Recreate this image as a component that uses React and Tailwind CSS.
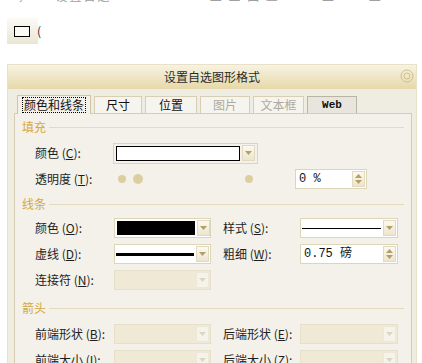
import React from 'react';

const Arrow = ({ disabled }) => (
  <svg width="7" height="4" viewBox="0 0 7 4">
    <path d="M0 0 H7 L3.5 4 Z" fill={disabled ? '#ddd6c2' : '#b3a063'} />
  </svg>
);

const DropBtn = ({ disabled }) => (
  <div className={`w-[13px] h-[16px] shrink-0 flex items-center justify-center border ${disabled ? 'border-[#ece7d8] bg-[#f6f3eb]' : 'border-[#e2dac0] bg-gradient-to-b from-[#fbf9f1] to-[#ece5cf]'}`}>
    <Arrow disabled={disabled} />
  </div>
);

const SpinBtn = () => (
  <div className="w-[13px] h-[16px] shrink-0 flex flex-col items-center justify-center gap-[2px] border border-[#e2dac0] bg-gradient-to-b from-[#fbf9f1] to-[#ece5cf]">
    <svg width="7" height="4" viewBox="0 0 7 4"><path d="M0 4 H7 L3.5 0 Z" fill="#b3a063" /></svg>
    <svg width="7" height="4" viewBox="0 0 7 4"><path d="M0 0 H7 L3.5 4 Z" fill="#b3a063" /></svg>
  </div>
);

const Label = ({ text, k, w }) => (
  <span className={`${w} shrink-0 whitespace-nowrap text-[#1e1e1e]`}>
    {text} (<u>{k}</u>):
  </span>
);

const Combo = ({ w, disabled, children }) => (
  <div className={`${w} h-[20px] flex items-center gap-[2px] pl-[1px] pr-[1px] border ${disabled ? 'border-[#e6dfca] bg-[#efe9d6]' : 'border-[#ddd5b8] bg-white'}`}>
    <div className="flex-1 h-[16px] flex items-center">{children}</div>
    <DropBtn disabled={disabled} />
  </div>
);

const Spin = ({ w, value }) => (
  <div className={`${w} h-[20px] flex items-center pl-[3px] pr-[1px] border border-[#ddd5b8] bg-white`}>
    <span className="flex-1 font-['Liberation_Mono','Noto_Sans_CJK_SC',monospace] text-[12px] text-[#111]">{value}</span>
    <SpinBtn />
  </div>
);

const Section = ({ title, h, pt }) => (
  <div className={`${h} ${pt} flex items-start pl-[7px]`}>
    <div className="h-[26px] flex items-center w-full">
      <span className="text-[#d4a843] pr-[3px]">{title}</span>
      <div className="flex-1 h-px bg-[#e4dbbd] mt-[1px]" />
    </div>
  </div>
);

const Row = ({ children }) => (
  <div className="h-[26px] flex items-center pl-[20px]">{children}</div>
);

const tabs = [
  { t: '尺寸', w: 'w-[48px]' },
  { t: '位置', w: 'w-[52px]' },
  { t: '图片', w: 'w-[50px]', off: true },
  { t: '文本框', w: 'w-[51px]', off: true },
];

export default function App() {
  return (
    <div className="w-[422px] h-[363px] overflow-hidden bg-white relative font-['Noto_Sans_CJK_SC',sans-serif] text-[12px] leading-none">
      {/* clipped line above */}
      <div className="h-[6px] overflow-hidden text-[#a0a0a0]">
        <div className="-mt-[10px] pl-[4px] whitespace-nowrap tracking-[2px]">
          一，一 &nbsp;设置自选 &nbsp; &nbsp; &nbsp; &nbsp; &nbsp; &nbsp; &nbsp; &nbsp;一 &nbsp;二 三 四 五 &nbsp; &nbsp; 一 二 &nbsp; 一 二
        </div>
      </div>

      <div className="mt-[12px] ml-[7px] flex items-center">
        <div className="w-[31px] h-[26px] flex items-center pl-[7px] bg-gradient-to-b from-[#fbfaf5] to-[#ebe6d4]">
          <div className="w-[16px] h-[11px] border border-black bg-[#fbfaf5]" />
        </div>
        <span className="text-[#222] -ml-[1px]">(</span>
      </div>

      {/* dialog */}
      <div className="mt-[20px] ml-[7px] w-[410px] h-[320px] border border-[#e8e1c8] bg-[#efece2]">
        <div className="h-[24px] flex items-center justify-center relative bg-gradient-to-b from-[#f7f3e2] to-[#e6d8a9]">
          <span className="text-[#2a2a2a] text-[12px]">设置自选图形格式</span>
          <svg className="absolute right-[2px] top-[4px]" width="14" height="14" viewBox="0 0 14 14">
            <circle cx="7" cy="7" r="6" fill="none" stroke="#cdbf8c" strokeWidth="1" />
            <circle cx="7" cy="7" r="3" fill="none" stroke="#cdbf8c" strokeWidth="1" />
          </svg>
        </div>

        <div className="pt-[5px] pl-[6px]">
          {/* tabs */}
          <div className="flex items-end h-[19px] pl-[3px] gap-[3px]">
            <div className="w-[74px] h-[19px] -mb-px relative z-10 flex items-center justify-center border border-b-0 border-[#cfc6a8] bg-[#f3f1e9]">
              <span className="px-[1px] py-[1px] border border-dotted border-black text-[#111]">颜色和线条</span>
            </div>
            {tabs.map((tb) => (
              <div
                key={tb.t}
                className={`${tb.w} h-[17px] flex items-center justify-center border border-b-0 border-[#d6cfb6] bg-[#f6f4ee] ${tb.off ? 'text-[#adaaa0]' : 'text-[#111]'}`}
              >
                {tb.t}
              </div>
            ))}
            <div className="w-[50px] h-[17px] flex items-center justify-center border border-b-0 border-[#b9b5a6] bg-[#e7e5dd] font-['Liberation_Mono',monospace] font-bold text-[11px] text-[#111]">
              Web
            </div>
          </div>

          {/* panel */}
          <div className="w-[398px] h-[300px] border border-[#d6cdb0] bg-[#f3f1e9] pr-[7px]">
            <Section title="填充" h="h-[26px]" pt="pt-0" />
            <Row>
              <Label text="颜色" k="C" w="w-[78px]" />
              <div className="w-[145px] h-[21px] flex items-center gap-[2px] px-[2px] border border-[#ddd5b8]">
                <div className="flex-1 h-[15px] border border-black bg-white" />
                <DropBtn />
              </div>
            </Row>
            <Row>
              <Label text="透明度" k="T" w="w-[83px]" />
              <div className="w-[8px] h-[8px] rounded-full bg-[#dccf9f]" />
              <div className="ml-[7px] w-[10px] h-[10px] rounded-full bg-[#dccf9f]" />
              <div className="ml-[102px] w-[8px] h-[8px] rounded-full bg-[#dccf9f]" />
              <div className="ml-[42px]">
                <Spin w="w-[72px]" value="0 %" />
              </div>
            </Row>
            <Section title="线条" h="h-[24px]" pt="-mt-[1px]" />
            <Row>
              <Label text="颜色" k="O" w="w-[79px]" />
              <Combo w="w-[97px]">
                <div className="w-[78px] h-[14px] ml-[1px] bg-black" />
              </Combo>
              <span className="ml-[12px]" />
              <Label text="样式" k="S" w="w-[77px]" />
              <Combo w="w-[98px]">
                <div className="w-full h-px bg-black" />
              </Combo>
            </Row>
            <Row>
              <Label text="虚线" k="D" w="w-[79px]" />
              <Combo w="w-[97px]">
                <div className="w-full h-[3px] bg-black" />
              </Combo>
              <span className="ml-[12px]" />
              <Label text="粗细" k="W" w="w-[77px]" />
              <Spin w="w-[98px]" value="0.75 磅" />
            </Row>
            <Row>
              <Label text="连接符" k="N" w="w-[79px]" />
              <Combo w="w-[97px]" disabled />
            </Row>
            <Section title="箭头" h="h-[28px]" pt="pt-[2px]" />
            <Row>
              <Label text="前端形状" k="B" w="w-[79px]" />
              <Combo w="w-[97px]" disabled />
              <span className="ml-[12px]" />
              <Label text="后端形状" k="E" w="w-[77px]" />
              <Combo w="w-[98px]" disabled />
            </Row>
            <Row>
              <Label text="前端大小" k="I" w="w-[79px]" />
              <Combo w="w-[97px]" disabled />
              <span className="ml-[12px]" />
              <Label text="后端大小" k="Z" w="w-[77px]" />
              <Combo w="w-[98px]" disabled />
            </Row>
          </div>
        </div>
      </div>
    </div>
  );
}
